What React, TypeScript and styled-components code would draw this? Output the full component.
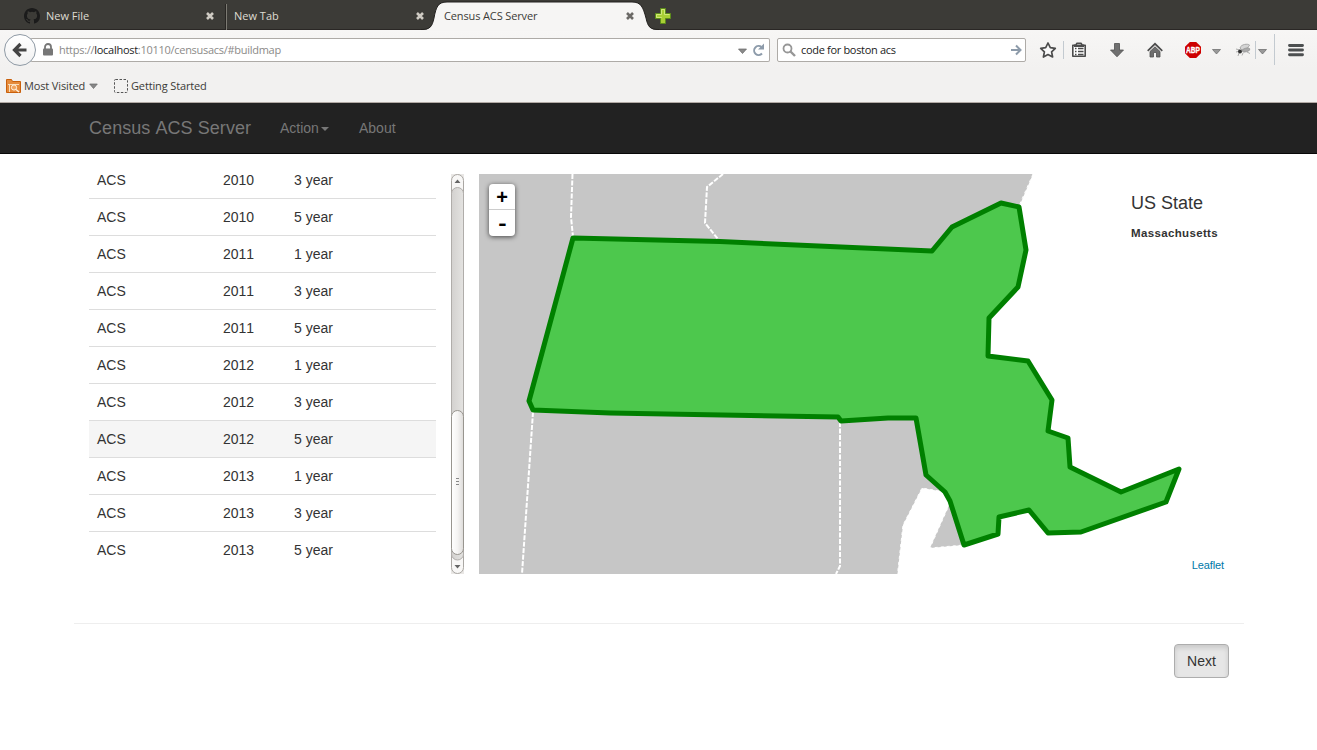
import React from "react";
import styled, { createGlobalStyle } from "styled-components";

const Global = createGlobalStyle`
  *, *::before, *::after { box-sizing: border-box; }
  body {
    margin: 0;
    background: #fff;
    color: #333;
    font: 14px/20px "Liberation Sans", Arial, sans-serif;
    font-kerning: none;
    overflow: hidden;
  }
`;

/* ---------- browser window ---------- */

const Page = styled.div`
  width: 1317px;
  height: 750px;
  overflow: hidden;
`;

const Chrome = styled.header`
  font-family: "Open Sans", "Noto Sans", sans-serif;
  font-size: 11px;
  line-height: 16px;
  color: #3c3b37;
  background: #f2f1f0;
  border-bottom: 1px solid #b2aaa5;
  height: 103px;
`;

const TabStrip = styled.div`
  height: 30px;
  display: flex;
  background: #3c3b37;
  border-bottom: 1px solid #2a2725;
`;

const Tab = styled.div<{ $width: number; $left: number; $right: number }>`
  width: ${(p) => p.$width}px;
  padding: 8px ${(p) => p.$right}px 0 ${(p) => p.$left}px;
  display: flex;
  flex: none;
  color: #dfdbd2;
  svg { flex: none; }
`;

const TabTitle = styled.span<{ $gap?: number; $track?: number }>`
  flex: 1;
  white-space: nowrap;
  padding-left: ${(p) => p.$gap ?? 0}px;
  letter-spacing: ${(p) => p.$track ?? 0}px;
`;

const Divider = styled.i`
  width: 2px;
  height: 26px;
  margin-top: 4px;
  border-left: 1px solid #282623;
  border-right: 1px solid #7c7a73;
`;

const ActiveTab = styled.div`
  position: relative;
  width: 238px;
  height: 30px;
  margin-left: -4px;
  flex: none;
`;

const TabShape = styled.svg`
  position: absolute;
  left: 0;
  top: 0;
`;

const ActiveLabel = styled.div`
  position: relative;
  display: flex;
  padding: 8px 24px 0 23px;
  color: #3c3b37;
`;

const NewTab = styled.div`
  padding: 8px 0 0 0;
  margin-left: -4px;
  line-height: 0;
`;

const NavBar = styled.div`
  height: 38px;
  display: flex;
  align-items: center;
  background: linear-gradient(#f7f6f5, #f2f1f0);
  padding: 1px 0 0 4px;
`;

const Back = styled.div`
  width: 32px;
  height: 32px;
  flex: none;
  border: 1px solid #8f9aa5;
  border-radius: 50%;
  background: linear-gradient(#fff, #f0f0f0);
  display: grid;
  place-items: center;
  position: relative;
`;

const Field = styled.div<{ $width: number }>`
  width: ${(p) => p.$width}px;
  height: 24px;
  flex: none;
  display: flex;
  align-items: center;
  background: #fff;
  border: 1px solid #aeaba7;
  border-radius: 2px;
`;

const UrlField = styled(Field)`
  margin-left: -6px;
  padding: 0 3px 0 12px;
  border-left: 0;
`;

const SearchField = styled(Field)`
  margin-left: 7px;
  padding: 0 3px 0 4px;
`;

const Url = styled.span`
  flex: 1;
  padding-left: 5px;
  letter-spacing: -0.28px;
  color: #8b8a88;
  b { font-weight: 400; color: #1d1d1d; }
`;

const Query = styled.span`
  flex: 1;
  padding-left: 5px;
  letter-spacing: -0.32px;
  color: #222;
`;

const Tools = styled.svg`
  flex: none;
  display: block;
  margin-top: -2px;
`;

const Bookmarks = styled.div`
  height: 34px;
  display: flex;
  align-items: center;
  padding: 2px 0 0 6px;
`;

const BookmarkText = styled.span<{ $gap: number; $w: number }>`
  padding-left: ${(p) => p.$gap}px;
  width: ${(p) => p.$w}px;
  white-space: nowrap;
  letter-spacing: -0.14px;
`;

/* ---------- site ---------- */

const SiteNav = styled.nav`
  height: 51px;
  background: #222;
  border-bottom: 1px solid #080808;
  display: flex;
  align-items: center;
  padding-left: 89px;
  color: #777;
`;

const Brand = styled.span`
  font-size: 18px;
  letter-spacing: 0.06px;
  width: 191px;
`;

const NavItem = styled.span<{ $w?: number }>`
  display: flex;
  align-items: center;
  width: ${(p) => (p.$w ? p.$w + "px" : "auto")};
`;

const Caret = styled.i`
  border: 4px solid transparent;
  border-top-color: #777;
  border-bottom: 0;
  margin: 2px 0 0 2px;
`;

const Container = styled.main`
  width: 1170px;
  margin-left: 74px;
`;

const Columns = styled.section`
  display: flex;
  height: 400px;
  margin: 20px 15px 0;
`;

/* the list is scrolled, so its first row starts above the column */
const List = styled.div`
  width: 347px;
  margin-top: -13px;
`;

const Row = styled.div<{ $active?: boolean }>`
  display: grid;
  grid-template-columns: 126px 71px 1fr;
  height: 37px;
  padding: 8px;
  border-top: 1px solid #ddd;
  background: ${(p) => (p.$active ? "#f5f5f5" : "#fff")};
  &:first-child { border-top-color: transparent; }
`;

const Scroll = styled.svg`
  margin-left: 15px;
  flex: none;
`;

const MapBox = styled.div`
  position: relative;
  width: 750px;
  height: 400px;
  margin-left: 15px;
  flex: none;
`;

const ZoomControl = styled.div`
  position: absolute;
  left: 10px;
  top: 10px;
  width: 26px;
  border-radius: 4px;
  background: #fff;
  box-shadow: 0 1px 5px rgba(0, 0, 0, 0.65);
  color: #000;
  font-weight: bold;
  font-size: 20px;
  text-align: center;
`;

const ZoomKey = styled.div<{ $line?: boolean }>`
  height: 26px;
  line-height: 26px;
  border-bottom: ${(p) => (p.$line ? "1px solid #ccc" : "0")};
`;

const ZoomDash = styled.span`
  display: inline-block;
  transform: scaleX(1.25);
`;

const Info = styled.div`
  position: absolute;
  left: 652px;
  top: 19px;
`;

const InfoTitle = styled.h4`
  margin: 0;
  font-size: 18px;
  font-weight: 400;
  line-height: 21px;
`;

const InfoName = styled.b`
  display: block;
  margin-top: 9px;
  font-size: 11.5px;
  letter-spacing: 0.35px;
`;

const Credit = styled.a`
  position: absolute;
  right: 5px;
  bottom: 0;
  font-size: 11px;
  line-height: 18px;
  letter-spacing: -0.1px;
  color: #0078a8;
`;

const Footer = styled.footer`
  margin-top: 49px;
  border-top: 1px solid #eee;
  padding: 20px 15px 0;
  display: flex;
  justify-content: flex-end;
`;

const NextButton = styled.button`
  width: 55px;
  height: 34px;
  padding: 0;
  font: inherit;
  color: #333;
  background: #e6e6e6;
  border: 1px solid #adadad;
  border-radius: 4px;
  box-shadow: inset 0 3px 5px rgba(0, 0, 0, 0.125);
`;

const Close = ({ color }: { color: string }) => (
  <svg width="10" height="16" viewBox="0 0 10 16">
    <path d="M2 5l6 6M8 5l-6 6" stroke={color} strokeWidth="2.6" />
  </svg>
);

const rows: [string, string][] = [
  ["2010", "3 year"], ["2010", "5 year"],
  ["2011", "1 year"], ["2011", "3 year"], ["2011", "5 year"],
  ["2012", "1 year"], ["2012", "3 year"], ["2012", "5 year"],
  ["2013", "1 year"], ["2013", "3 year"], ["2013", "5 year"],
];

const massachusetts =
  "573,238 720,241.5 932,251 952,227 1001,203 1019,207 1026,250 1018,287 989,318 988,356 1028,361 1052,400 1048,431 1068,438 1070,467 1121,492 1179,469 1166,502 1081,532 1048,533 1029,510 999,517 998,534 964,545 950,501 945,492 926,475 916,418 888,418 841,421 838,417 610,413 533,410 529,401";

const StateMap = () => (
  <svg width="750" height="400" viewBox="479 174 750 400">
    <g fill="#c6c6c6">
      <path d="M479 174H1033L1019 207L1001 203L916 418L926 475L945 492L922 488L903 525L897.500 574H479Z" />
      <path d="M950 503L930 548L964 545Z" />
    </g>
    <g fill="none" stroke="#fff" strokeWidth="2" strokeDasharray="5 1.5">
      <path d="M572.5 174L571 217L573 237M723 174L707 187L705 223L718 239" />
      <path d="M533 412L522 574M840 422V566L836 574" />
    </g>
    <g fill="none" stroke="#fff" strokeWidth="1" strokeDasharray="3 3">
      <path d="M1033 174L1019 206M945 492L922 488L903 525L897.500 574M950 503L930 548L964 545" />
    </g>
    <polygon points={massachusetts} fill="#4dc84d" stroke="#008000" strokeWidth="5" strokeLinejoin="round" />
  </svg>
);

const Scrollbar = () => (
  <Scroll width="13" height="400" viewBox="0 0 13 400">
    <defs>
      <linearGradient id="thumb">
        <stop offset="0" stopColor="#fff" />
        <stop offset=".5" stopColor="#f5f4f3" />
        <stop offset="1" stopColor="#dddbd9" />
      </linearGradient>
      <linearGradient id="trough">
        <stop offset="0" stopColor="#d3d1cf" />
        <stop offset="1" stopColor="#e4e3e1" />
      </linearGradient>
    </defs>
    <rect width="13" height="400" fill="#e9e7e5" />
    <rect x=".5" y=".5" width="12" height="399" rx="6" fill="#f8f7f6" stroke="#aaa7a3" />
    <rect x=".5" y="13.5" width="12" height="372.5" rx="6" fill="url(#trough)" stroke="#b0adaa" />
    <rect x=".5" y="236.5" width="12" height="144" rx="6" fill="url(#thumb)" stroke="#98958f" />
    <path d="M5 304.500h3M5 307.500h3M5 310.500h3" stroke="#888" />
    <path d="M3.500 9L6.500 5.500L9.500 9ZM3.500 391L6.500 394.500L9.500 391Z" fill="#666" />
  </Scroll>
);

/* toolbar buttons right of the search field */
const Toolbar = () => (
  <Tools width="291" height="36" viewBox="1026 31 291 36">
    <g stroke="#c3cad0">
      <path d="M1063.500 41v18M1255.500 41v18M1274.500 34v31" />
    </g>
    <path
      d="M1048 43L1050.300 47.700L1055.300 48.300L1051.600 51.800L1052.600 57L1048 54.500L1043.400 57L1044.400 51.800L1040.700 48.300L1045.700 47.700Z"
      fill="#fafafa" stroke="#4c4c4c" strokeWidth="1.700" strokeLinejoin="round"
    />
    <path d="M1072.800 45.300h3l1-2h4.400l1 2h3v11h-12.400z" fill="#fff" stroke="#4c4c4c" strokeWidth="1.600" strokeLinejoin="round" />
    <path d="M1074 44.500h10v2.500h-10z" fill="#4c4c4c" />
    <path d="M1075 48.500h1.500M1078 48.500h5.500M1075 51.500h1.500M1078 51.500h5.500M1075 54.500h1.500M1078 54.500h5.500" stroke="#4c4c4c" strokeWidth="1.300" />
    <path d="M1114.500 43.500h5v6.500h4L1117 56.800L1110.500 50h4z" fill="#707070" stroke="#505050" strokeWidth=".8" />
    <path d="M1147.700 50.800L1155 43.800L1162.300 50.800" fill="none" stroke="#4c4c4c" strokeWidth="1.700" />
    <path d="M1150 51.500L1155 46.800L1160 51.500V57h-3.500v-4.500h-3V57H1150z" fill="#6e6e6e" stroke="#505050" strokeWidth=".8" />
    <path d="M1189.800 42h6.400L1201 46.800v6.400L1196.200 58h-6.400L1185 53.200v-6.400z" fill="#cd0000" />
    <text x="1186" y="53.200" fontSize="8.500" fontWeight="bold" fill="#fff" stroke="#fff" strokeWidth=".3" textLength="14" lengthAdjust="spacingAndGlyphs" fontFamily="Liberation Sans, sans-serif">ABP</text>
    <path d="M1212.500 49.500h8L1216.500 54ZM1258.500 49.500h8L1262.500 54Z" fill="#999" stroke="#666" strokeWidth=".7" />
    <g stroke="#999" fill="none" strokeWidth=".8">
      <path d="M1236 49l4 1M1239 53l-1 3M1243 53l-1 2.500M1247 52l3 1.500M1236 52l4-1" />
      <path d="M1240 48C1241 44 1248 43.500 1249.500 45C1249 47 1245 50 1242 50Z" fill="#d4d4d4" />
      <ellipse cx="1246" cy="50" rx="4" ry="1.800" fill="#aaa" transform="rotate(-15 1246 50)" />
    </g>
    <circle cx="1240" cy="51.500" r="2" fill="#333" />
    <path d="M1289.500 45.500h13M1289.500 50h13M1289.500 54.700h13" stroke="#4c4f50" strokeWidth="2.900" strokeLinecap="round" />
  </Tools>
);

export default function App() {
  return (
    <Page>
      <Global />
      <Chrome>
        <TabStrip>
          <Tab $width={225} $left={24} $right={10}>
            <svg width="16" height="16" viewBox="0 0 16 16">
              <path
                fill="#1b1b1b"
                d="M8 0C3.580 0 0 3.580 0 8c0 3.540 2.290 6.530 5.470 7.590.4.070.55-.17.55-.38 0-.19-.01-.82-.01-1.490-2.010.37-2.530-.49-2.690-.94-.09-.23-.48-.94-.82-1.130-.28-.15-.68-.52-.01-.53.63-.01 1.080.58 1.230.82.72 1.210 1.870.87 2.330.66.07-.52.28-.87.51-1.070-1.780-.2-3.640-.89-3.640-3.950 0-.87.31-1.590.82-2.150-.08-.2-.36-1.020.08-2.120 0 0 .67-.21 2.200.82a7.700 7.700 0 014 0c1.530-1.040 2.200-.82 2.200-.82.44 1.100.16 1.920.08 2.120.51.56.82 1.270.82 2.150 0 3.070-1.870 3.750-3.650 3.950.29.25.54.73.54 1.480 0 1.070-.01 1.930-.01 2.200 0 .21.15.46.55.38A8 8 0 0016 8c0-4.420-3.580-8-8-8z"
              />
            </svg>
            <TabTitle $gap={6}>New File</TabTitle>
            <Close color="#cfcbc3" />
          </Tab>
          <Divider />
          <Tab $width={198} $left={7} $right={0}>
            <TabTitle>New Tab</TabTitle>
            <Close color="#cfcbc3" />
          </Tab>
          <ActiveTab>
            <TabShape width="238" height="31" viewBox="421 0 238 31">
              <path
                d="M421 30C430 30 432 27 434 18C436 7 438 2 447 2H632C641 2 643 7 646 18C648 27 650 30 659 30V31H421Z"
                fill="#f6f5f4"
              />
              <path d="M421 29.500C430 29.500 432 27 434 18C436 7 438 2 447 2H632C641 2 643 7 646 18C648 27 650 29.500 659 29.500" fill="none" stroke="#22201e" />
            </TabShape>
            <ActiveLabel>
              <TabTitle $track={-0.13}>Census ACS Server</TabTitle>
              <Close color="#6b6966" />
            </ActiveLabel>
          </ActiveTab>
          <NewTab>
            <svg width="17" height="17" viewBox="0 0 17 17">
              <path d="M5.500 .5h5v5h5v5h-5v5h-5v-5h-5v-5h5z" fill="#a9cf35" stroke="#5c8c1b" />
              <path d="M6.500 10V9.500H1.500V6.500H6.500V1.500h3v5h5" fill="none" stroke="#d0e878" />
            </svg>
          </NewTab>
        </TabStrip>
        <NavBar>
          <Back>
            <svg width="16" height="16" viewBox="0 0 16 16">
              <path d="M8.500 2L2.500 8L8.500 14M3 8H14.500" fill="none" stroke="#444" strokeWidth="3.200" />
            </svg>
          </Back>
          <UrlField $width={740}>
            <svg width="12" height="14" viewBox="0 0 12 14">
              <path d="M3 6V4a3 3 0 016 0V6" fill="none" stroke="#777" strokeWidth="1.800" />
              <rect x="1" y="5.500" width="10" height="7" rx="1" fill="#777" />
            </svg>
            <Url>https://<b>localhost</b>:10110/censusacs/#buildmap</Url>
            <svg width="28" height="16" viewBox="738 42 28 16">
              <path d="M738.500 49h8L742.500 53.500Z" fill="#8a8a8a" stroke="#666" strokeWidth=".7" />
              <path d="M762 53.500A4.500 4.500 0 1 1 761.500 47" fill="none" stroke="#8d9baa" strokeWidth="2" />
              <path d="M764 43.500v6h-6z" fill="#8d9baa" />
            </svg>
          </UrlField>
          <SearchField $width={249}>
            <svg width="14" height="14" viewBox="0 0 14 14">
              <circle cx="5.500" cy="5.500" r="4" fill="none" stroke="#979797" strokeWidth="1.800" />
              <path d="M8.500 8.500L13 13" stroke="#979797" strokeWidth="2.400" />
            </svg>
            <Query>code for boston acs</Query>
            <svg width="12" height="12" viewBox="0 0 12 12">
              <path d="M1 6H10M6 1.500L10.500 6L6 10.500" fill="none" stroke="#8d9baa" strokeWidth="2" />
            </svg>
          </SearchField>
          <Toolbar />
        </NavBar>
        <Bookmarks>
          <svg width="15" height="16" viewBox="0 0 15 16">
            <path d="M.5 1.500h5l1 2h8v11H.5z" fill="#e58b3c" stroke="#c9600c" />
            <path d="M2 6.500h11M3.500 6v8" stroke="#f9dcb9" />
            <circle cx="8" cy="9.500" r="2.600" fill="#f0a35e" stroke="#fff3e2" />
            <path d="M10 11.500l3 2.500" stroke="#fff3e2" strokeWidth="1.400" />
          </svg>
          <BookmarkText $gap={3} $w={68}>Most Visited</BookmarkText>
          <svg width="9" height="6" viewBox="0 0 9 6">
            <path d="M.7 1h7.600L4.500 5.500Z" fill="#888" stroke="#666" strokeWidth=".7" />
          </svg>
          <svg width="30" height="14" viewBox="0 0 30 14">
            <rect x="16.500" y=".5" width="13" height="13" rx="1" fill="none" stroke="#555" strokeDasharray="2.500 1.500" />
          </svg>
          <BookmarkText $gap={3} $w={90}>Getting Started</BookmarkText>
        </Bookmarks>
      </Chrome>

      <SiteNav>
        <Brand>Census ACS Server</Brand>
        <NavItem $w={79}>Action<Caret /></NavItem>
        <NavItem>About</NavItem>
      </SiteNav>

      <Container>
        <Columns>
          <List>
            {rows.map(([year, span]) => (
              <Row key={year + span} $active={year === "2012" && span === "5 year"}>
                <span>ACS</span>
                <span>{year}</span>
                <span>{span}</span>
              </Row>
            ))}
          </List>
          <Scrollbar />
          <MapBox>
            <StateMap />
            <ZoomControl>
              <ZoomKey $line>+</ZoomKey>
              <ZoomKey><ZoomDash>-</ZoomDash></ZoomKey>
            </ZoomControl>
            <Info>
              <InfoTitle>US State</InfoTitle>
              <InfoName>Massachusetts</InfoName>
            </Info>
            <Credit>Leaflet</Credit>
          </MapBox>
        </Columns>
        <Footer>
          <NextButton>Next</NextButton>
        </Footer>
      </Container>
    </Page>
  );
}
